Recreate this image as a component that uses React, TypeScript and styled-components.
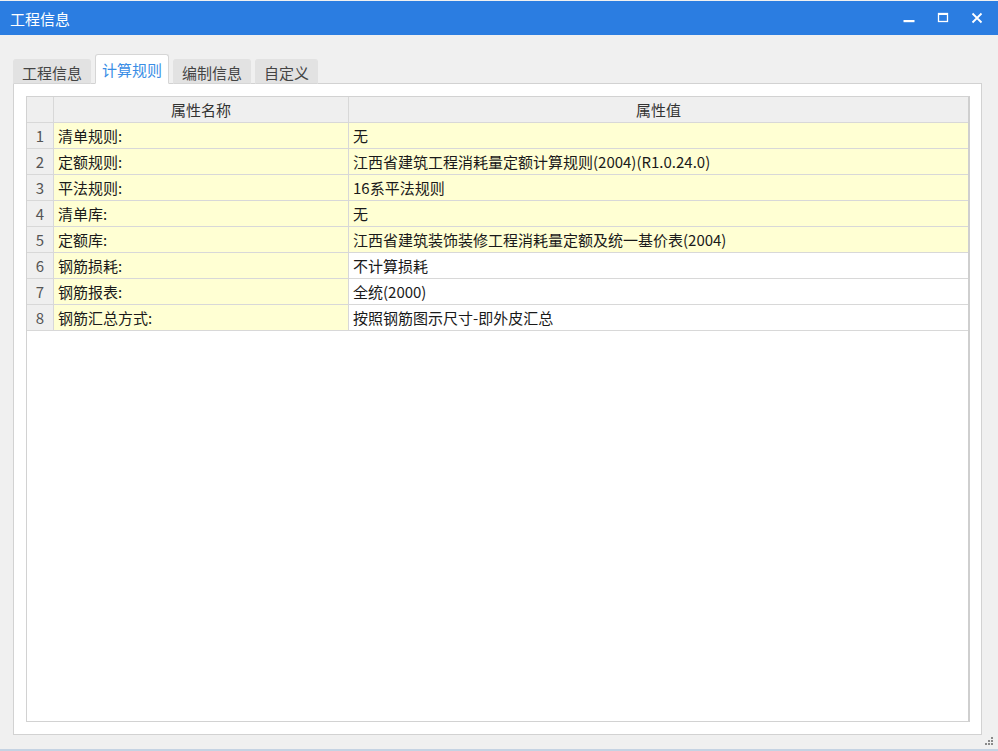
import React from "react";
import styled, { createGlobalStyle } from "styled-components";

const GlobalStyle = createGlobalStyle`
  html, body {
    margin: 0;
    padding: 0;
    background: #f0f0f0;
  }
  body {
    font-family: "Microsoft YaHei", "Noto Sans CJK SC", "Noto Sans", sans-serif;
  }
`;

const Window = styled.div`
  width: 998px;
  height: 751px;
  display: flex;
  flex-direction: column;
  background: #f0f0f0;
  border-bottom: 2px solid #c5d3e3;
  box-sizing: border-box;
  position: relative;
  overflow: hidden;
`;

const TitleBar = styled.div`
  height: 34px;
  margin-top: 1px;
  background: #2b7de1;
  display: flex;
  align-items: center;
  padding-left: 10px;
  padding-right: 4px;
  flex-shrink: 0;
`;

const Title = styled.div`
  color: #ffffff;
  font-size: 15px;
  flex: 1;
`;

const Controls = styled.div`
  display: flex;
  align-items: center;
  height: 100%;
`;

const CtrlButton = styled.div`
  width: 34px;
  height: 100%;
  display: flex;
  align-items: center;
  justify-content: center;
`;

const Body = styled.div`
  flex: 1;
  padding: 20px 16px 14px 13px;
  display: flex;
  flex-direction: column;
`;

const TabRow = styled.div`
  display: flex;
  align-items: flex-end;
  gap: 4px;
  height: 29px;
  position: relative;
  z-index: 1;
  margin-bottom: -1px;
`;

const Tab = styled.div<{ $active?: boolean }>`
  height: ${(p) => (p.$active ? "30px" : "25px")};
  padding: 0 ${(p) => (p.$active ? "6px" : "8px")};
  display: flex;
  align-items: center;
  font-size: 15px;
  color: ${(p) => (p.$active ? "#3a8ee6" : "#444")};
  background: ${(p) => (p.$active ? "#ffffff" : "#e2e2e2")};
  border: 1px solid ${(p) => (p.$active ? "#d6d6d6" : "#e2e2e2")};
  border-bottom: ${(p) => (p.$active ? "1px solid #ffffff" : "1px solid #d6d6d6")};
  border-radius: 3px 3px 0 0;
  box-sizing: border-box;
  padding-top: ${(p) => (p.$active ? "0" : "1px")};
`;

const Panel = styled.div`
  flex: 1;
  background: #ffffff;
  border: 1px solid #d2d2d2;
  padding: 12px 11px 12px 12px;
  display: flex;
  flex-direction: column;
`;

const Grid = styled.div`
  flex: 1;
  border: 1px solid #d2d2d2;
  border-right: 2px solid #cfcfcf;
  display: flex;
  flex-direction: column;
  background: #ffffff;
`;

const Row = styled.div`
  display: grid;
  grid-template-columns: 27px 295px 1fr;
  height: 26px;
  font-size: 15px;
  color: #1a1a1a;
`;

const Cell = styled.div<{ $bg?: string; $center?: boolean; $head?: boolean }>`
  background: ${(p) => p.$bg || "#ffffff"};
  border-right: 1px solid #d8d8d8;
  border-bottom: 1px solid #d8d8d8;
  display: flex;
  align-items: center;
  justify-content: ${(p) => (p.$center ? "center" : "flex-start")};
  padding-left: ${(p) => (p.$center ? "0" : "4px")};
  color: ${(p) => (p.$head ? "#333" : "#1a1a1a")};
  white-space: nowrap;
  overflow: hidden;
  &:last-child {
    border-right: none;
  }
`;

const NumCell = styled(Cell)`
  background: #efefef;
  color: #555;
  justify-content: center;
  padding-left: 0;
`;

const Grip = styled.div`
  position: absolute;
  right: 5px;
  bottom: 4px;
  display: grid;
  grid-template-columns: repeat(3, 2px);
  grid-template-rows: repeat(3, 2px);
  gap: 1px;
`;

const Dot = styled.span<{ $on?: boolean }>`
  width: 2px;
  height: 2px;
  background: ${(p) => (p.$on ? "#8a8a8a" : "transparent")};
`;

const YELLOW = "#ffffd3";
const HEAD = "#efefef";

const rows = [
  { name: "清单规则:", value: "无", yellow: true },
  { name: "定额规则:", value: "江西省建筑工程消耗量定额计算规则(2004)(R1.0.24.0)", yellow: true },
  { name: "平法规则:", value: "16系平法规则", yellow: true },
  { name: "清单库:", value: "无", yellow: true },
  { name: "定额库:", value: "江西省建筑装饰装修工程消耗量定额及统一基价表(2004)", yellow: true },
  { name: "钢筋损耗:", value: "不计算损耗", yellow: false },
  { name: "钢筋报表:", value: "全统(2000)", yellow: false },
  { name: "钢筋汇总方式:", value: "按照钢筋图示尺寸-即外皮汇总", yellow: false },
];

const tabs = ["工程信息", "计算规则", "编制信息", "自定义"];

const App: React.FC = () => {
  const gripMask = [false, false, true, false, true, true, true, true, true];
  return (
    <>
      <GlobalStyle />
      <Window>
        <TitleBar>
          <Title>工程信息</Title>
          <Controls>
            <CtrlButton>
              <svg width="12" height="12" viewBox="0 0 12 12">
                <rect x="0.5" y="8" width="11" height="2.2" fill="#fff" />
              </svg>
            </CtrlButton>
            <CtrlButton>
              <svg width="12" height="12" viewBox="0 0 12 12">
                <rect x="1.5" y="1.5" width="9" height="8" fill="none" stroke="#fff" strokeWidth="1.3" />
                <rect x="1" y="1" width="10" height="2" fill="#fff" />
              </svg>
            </CtrlButton>
            <CtrlButton>
              <svg width="12" height="12" viewBox="0 0 12 12">
                <path d="M1.5 1.5 L10.5 10.5 M10.5 1.5 L1.5 10.5" stroke="#fff" strokeWidth="1.8" />
              </svg>
            </CtrlButton>
          </Controls>
        </TitleBar>
        <Body>
          <TabRow>
            {tabs.map((t, i) => (
              <Tab key={t} $active={i === 1}>
                {t}
              </Tab>
            ))}
          </TabRow>
          <Panel>
            <Grid>
              <Row>
                <Cell $bg={HEAD} $center />
                <Cell $bg={HEAD} $center $head>
                  属性名称
                </Cell>
                <Cell $bg={HEAD} $center $head>
                  属性值
                </Cell>
              </Row>
              {rows.map((r, i) => (
                <Row key={i}>
                  <NumCell>{i + 1}</NumCell>
                  <Cell $bg={YELLOW}>{r.name}</Cell>
                  <Cell $bg={r.yellow ? YELLOW : "#ffffff"}>{r.value}</Cell>
                </Row>
              ))}
            </Grid>
          </Panel>
        </Body>
        <Grip>
          {gripMask.map((on, i) => (
            <Dot key={i} $on={on} />
          ))}
        </Grip>
      </Window>
    </>
  );
};

export default App;
